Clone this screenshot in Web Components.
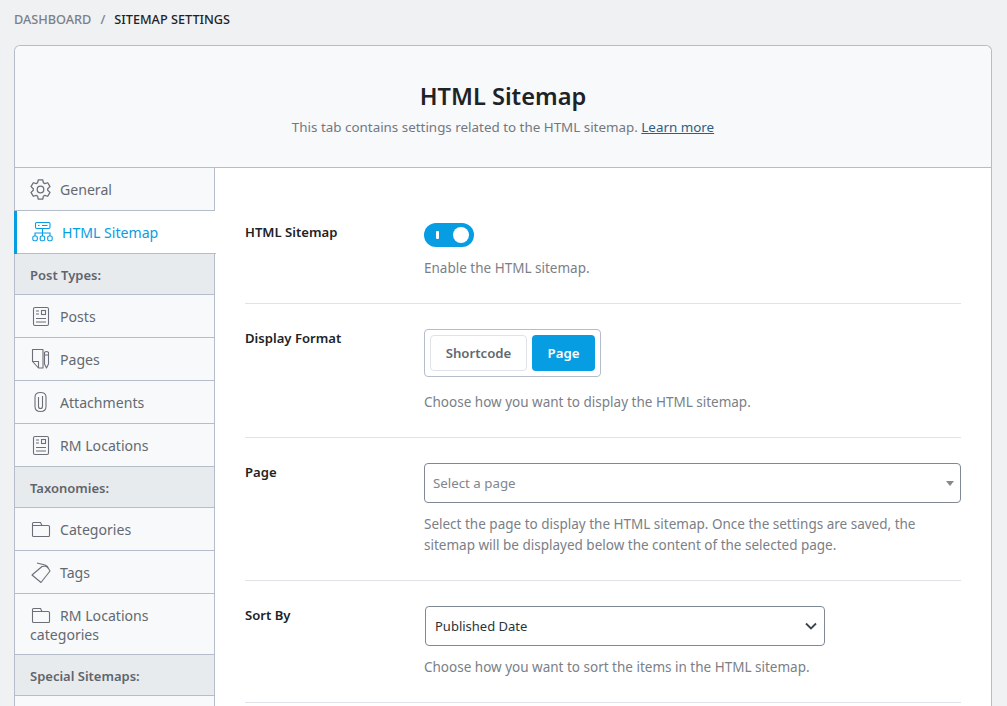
<!DOCTYPE html>
<html><head><meta charset="utf-8">
<style>
html,body{margin:0;height:706px;overflow:hidden;background:#f0f1f3;font-family:"Noto Sans","Open Sans",sans-serif;color:#50575e}
</style></head><body>
<sitemap-page></sitemap-page>
<script>
function gearPath(){
  let d='';const cx=10.5,cy=10.5;
  const pt=(r,a)=>(cx+r*Math.cos(a*Math.PI/180)).toFixed(2)+' '+(cy+r*Math.sin(a*Math.PI/180)).toFixed(2);
  for(let k=0;k<6;k++){const a=-90+60*k;
    d+=(k?'L':'M')+pt(7.2,a-24)+'L'+pt(9.9,a-13)+'L'+pt(9.9,a+13)+'L'+pt(7.2,a+24)+'Q'+pt(7.4,a+30)+' '+pt(7.2,a+36);}
  return d+'Z';
}
const ic={
gear:`<svg width="21" height="21" viewBox="0 0 21 21" fill="none" stroke="currentColor" stroke-width="1.300" stroke-linejoin="round"><circle cx="10.500" cy="10.500" r="3.300"/><path d="${gearPath()}"/></svg>`,
map:'<svg width="21" height="20" viewBox="0 0 21 20" fill="none" stroke="currentColor" stroke-width="1.100"><rect x="3.500" y=".5" width="14.500" height="6" rx="1.200"/><path d="M6 3.500h1.500M10 3.500h5.500M10.500 6.500v4.500M3 14v-3h15v3M10.500 11v3"/><rect x=".8" y="14" width="4.500" height="4.800" rx="1.500"/><rect x="8.200" y="14" width="4.500" height="4.800" rx="1.500"/><rect x="15.700" y="14" width="4.500" height="4.800" rx="1.500"/></svg>',
post:'<svg width="16" height="19" viewBox="0 0 16 19" fill="none" stroke="currentColor" stroke-width="1.100"><rect x=".5" y=".5" width="15" height="18" rx="1.500"/><path d="M3 4h3M3 7h3M3 11.500h10M3 15h10"/><rect x="8.500" y="3.500" width="4" height="4"/></svg>',
page:'<svg width="17" height="20" viewBox="0 0 17 20" fill="none" stroke="currentColor" stroke-width="1.100" stroke-linejoin="round"><path d="M.5 .5H11V19H6.500L.5 12.500Z"/><path d="M.5 12.500H6.500V19"/><path d="M12.500 3.500q2-2 4 0V15l-2 4-2-4zM12.500 6h4"/></svg>',
clip:'<svg width="13" height="20" viewBox="0 0 13 20" fill="none" stroke="currentColor" stroke-width="1.100"><path d="M4.500 5v9.500q0 2 2 2t2-2V4"/><path d="M1 5v9.500q0 5 5.500 5t5.500-5V5Q12 .5 6.500 .5T1 5z"/></svg>',
folder:'<svg width="18" height="15" viewBox="0 0 18 15" fill="none" stroke="currentColor" stroke-width="1.100"><path d="M.5 13.500V1.500q0-1 1-1h7l1.500 3h6q1.500 0 1.500 1v9q0 1-1 1H1.500q-1 0-1-1zM.5 3.500h9.500"/></svg>',
tag:'<svg width="20" height="21" viewBox="0 0 20 21" fill="none" stroke="currentColor" stroke-width="1.100" stroke-linejoin="round"><path d="M1 13L11 4.500 16 4 19 9 10 20.500Z"/><path d="M6 1l8 2 3 3"/></svg>'
};
function def(name,css,html){
  customElements.define(name,class extends HTMLElement{
    constructor(){super();const r=this.attachShadow({mode:'open'});r.innerHTML='<style>'+css+'</style>'+(typeof html==='function'?'':html);}
    connectedCallback(){if(typeof html==='function'&&!this._d){this._d=1;this.shadowRoot.innerHTML+=html(this);}}
  });
}
def('bread-crumb',`:host{display:flex;align-items:center;height:38px;padding-left:14px;font-size:12.700px;font-weight:500;text-transform:uppercase;color:#1d2327;white-space:nowrap}
.d{color:#7b8088}.s{color:#7b8088;margin:0 9px}`,`<span class="d">Dashboard</span><span class="s">/</span><span>Sitemap Settings</span>`);
def('card-head',`:host{display:block;flex:none;height:121px;background:#f8f9fb;border-bottom:1px solid #b4bdc9;border-radius:6px 6px 0 0;text-align:center}
h1{margin:0;padding-top:32px;font-size:23.600px;line-height:36px;font-weight:600;color:#1d2327}
p{margin:3px 0 0;font-size:13.400px;line-height:20px;color:#72787f}
a{color:#2c5f86;text-decoration:underline}`,`<h1>HTML Sitemap</h1><p>This tab contains settings related to the HTML sitemap. <a>Learn more</a></p>`);
def('nav-item',`:host{display:block;background:#f8f9fb;border-bottom:1px solid #b4bdc9;border-right:1px solid #b4bdc9;color:#636971;font-size:14.100px;line-height:19px;padding:11.500px 15px;box-sizing:border-box}
:host([active]){background:#fff;color:#069de3;border-right:none;margin-right:-1px;position:relative;padding-left:17px}
:host([active])::before{content:"";position:absolute;left:-1px;top:0;bottom:-1px;width:3px;background:#069de3}
.i{display:inline-flex;width:21px;height:19px;align-items:center;justify-content:center;vertical-align:top;margin-right:9px;color:#6d6f78}
:host([active]) .i{color:#069de3}
svg{display:block;overflow:visible;flex:none}`,
h=>`<span class="i">${ic[h.getAttribute('icon')]}</span><slot></slot>`);
def('nav-head',`:host{display:block;background:#e8ebee;border-bottom:1px solid #b4bdc9;border-right:1px solid #b4bdc9;font-size:13px;font-weight:600;line-height:18px;padding:12px 15px 10px;color:#5f656c}`,`<slot></slot>`);
def('nav-fill',`:host{display:block;flex:1;background:#f8f9fb;border-right:1px solid #b4bdc9}`,``);
def('side-nav',`:host{display:flex;flex-direction:column;width:200px;flex:none;box-sizing:border-box}`,`<slot></slot>`);
def('set-row',`:host{display:grid;grid-template-columns:179px 537px;padding:25px 0 24px;border-bottom:1px solid #dfe3e8}
.l{font-size:13.100px;font-weight:600;line-height:18px;color:#1d2327}`,
h=>`<div class="l">${h.getAttribute('label')}</div><div><slot></slot></div>`);
def('set-desc',`:host{display:block;font-size:13.500px;line-height:21px;color:#7a8087;margin-top:11px}`,`<slot></slot>`);
def('tog-gle',`:host{display:block;width:50px;height:24px;border-radius:12px;background:#069de3;position:relative}
i{position:absolute;left:12px;top:8px;width:3px;height:8px;background:#fff;border-radius:1px}
b{position:absolute;right:5px;top:4px;width:16px;height:16px;border-radius:50%;background:#fff}`,`<i></i><b></b>`);
def('btn-group',`:host{display:flex;width:fit-content;gap:5px;padding:5px;border:1px solid #b4bdc9;border-radius:4px;background:#fff;margin-bottom:15px}
span{display:flex;align-items:center;justify-content:center;height:36px;border-radius:4px;font-size:13.200px;font-weight:600;box-sizing:border-box}
.a{width:97px;border:1px solid #dfe3e8;color:#626970}
.b{width:63px;background:#069de3;color:#fff}`,`<span class="a">Shortcode</span><span class="b">Page</span>`);
def('page-select',`:host{display:flex;align-items:center;justify-content:space-between;height:40px;box-sizing:border-box;border:1px solid #7e8993;border-radius:4px;padding:0 6px 0 8px;font-size:13.300px;color:#80868d;background:#fff}
i{width:0;height:0;border:4px solid transparent;border-top:5px solid #888;border-bottom:0}`,`<span>Select a page</span><i></i>`);
def('sort-select',`:host{display:flex;align-items:center;justify-content:space-between;width:400px;margin-left:1px;height:40px;box-sizing:border-box;border:1px solid #7e8993;border-radius:4px;padding:0 7px 0 9px;font-size:13px;color:#2c3338;background:#fff}
svg{display:block}`,`<span>Published Date</span><svg width="12" height="8" viewBox="0 0 12 8" fill="none" stroke="#3c434a" stroke-width="1.800"><path d="M1 1.500l5 5 5-5"/></svg>`);
def('sitemap-page',`:host{display:flex;flex-direction:column;height:706px}
.gap{height:7px;flex:none}
.card{flex:1;min-height:0;display:flex;flex-direction:column;margin:0 15px 0 14px;border:1px solid #b4bdc9;border-bottom:none;border-radius:6px 6px 0 0;box-sizing:border-box;background:#fff}
.body{display:flex;flex:1;min-height:0}
.main{flex:1;padding:30px 30px 0}`,
`<bread-crumb></bread-crumb>
<div class="gap"></div>
<div class="card"><card-head></card-head><div class="body">
<side-nav>
<nav-item icon="gear">General</nav-item>
<nav-item icon="map" active>HTML Sitemap</nav-item>
<nav-head>Post Types:</nav-head>
<nav-item icon="post">Posts</nav-item>
<nav-item icon="page">Pages</nav-item>
<nav-item icon="clip">Attachments</nav-item>
<nav-item icon="post">RM Locations</nav-item>
<nav-head>Taxonomies:</nav-head>
<nav-item icon="folder">Categories</nav-item>
<nav-item icon="tag">Tags</nav-item>
<nav-item icon="folder" style="padding-bottom:10.500px">RM Locations categories</nav-item>
<nav-head>Special Sitemaps:</nav-head>
<nav-fill></nav-fill>
</side-nav>
<div class="main">
<set-row label="HTML Sitemap"><tog-gle></tog-gle><set-desc>Enable the HTML sitemap.</set-desc></set-row>
<set-row label="Display Format"><btn-group></btn-group><set-desc>Choose how you want to display the HTML sitemap.</set-desc></set-row>
<set-row label="Page"><page-select></page-select><set-desc>Select the page to display the HTML sitemap. Once the settings are saved, the sitemap will be displayed below the content of the selected page.</set-desc></set-row>
<set-row label="Sort By"><sort-select></sort-select><set-desc>Choose how you want to sort the items in the HTML sitemap.</set-desc></set-row>
</div></div></div>`);
</script></body></html>
